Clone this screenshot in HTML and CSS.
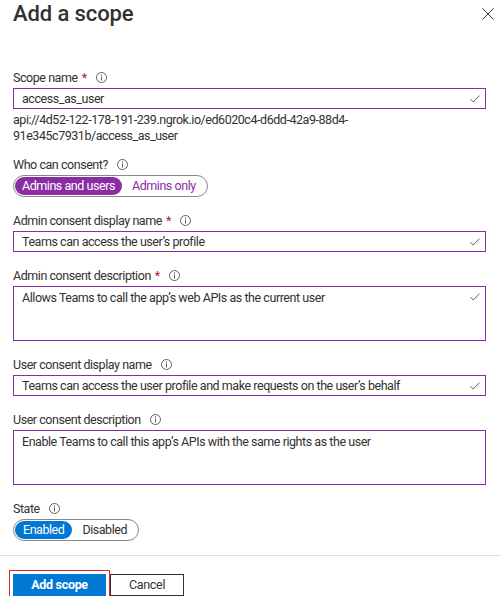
FILE: index.html
```html
<!DOCTYPE html>
<html lang="en">
<head>
<meta charset="utf-8">
<title>Add a scope</title>
<link rel="stylesheet" href="styles.css">
</head>
<body>
<div class="panel">
  <header class="head">
    <h1 class="title">Add a scope</h1>
    <button class="close" aria-label="Close">
      <svg width="12" height="12" viewBox="0 0 12 12"><path d="M0.5 0.5L11.5 11.5M11.5 0.5L0.5 11.5" stroke="#323130" stroke-width="1" fill="none"/></svg>
    </button>
  </header>

  <main class="form">
    <section class="field first">
      <div class="label"><span>Scope name</span><span class="req">*</span><span class="info"><svg width="11" height="11" viewBox="0 0 11 11"><circle cx="5.5" cy="5.5" r="5" stroke="#605e5c" fill="none"/><path d="M5.5 4.5V8.5" stroke="#605e5c"/><circle cx="5.5" cy="3" r="0.7" fill="#605e5c"/></svg></span></div>
      <div class="input"><span class="value">access_as_user</span><svg class="check" width="10" height="8" viewBox="0 0 10 8"><path d="M0.5 4.2L3.2 7L9.5 0.6" stroke="#605e5c" fill="none"/></svg></div>
      <div class="hint">api://4d52-122-178-191-239.ngrok.io/ed6020c4-d6dd-42a9-88d4-<br>91e345c7931b/access_as_user</div>
    </section>

    <section class="field who">
      <div class="label"><span>Who can consent?</span><span class="info"><svg width="11" height="11" viewBox="0 0 11 11"><circle cx="5.5" cy="5.5" r="5" stroke="#605e5c" fill="none"/><path d="M5.5 4.5V8.5" stroke="#605e5c"/><circle cx="5.5" cy="3" r="0.7" fill="#605e5c"/></svg></span></div>
      <div class="toggle purple">
        <span class="opt on">Admins and users</span><span class="opt">Admins only</span>
      </div>
    </section>

    <section class="field">
      <div class="label"><span>Admin consent display name</span><span class="req">*</span><span class="info"><svg width="11" height="11" viewBox="0 0 11 11"><circle cx="5.5" cy="5.5" r="5" stroke="#605e5c" fill="none"/><path d="M5.5 4.5V8.5" stroke="#605e5c"/><circle cx="5.5" cy="3" r="0.7" fill="#605e5c"/></svg></span></div>
      <div class="input"><span class="value">Teams can access the user’s profile</span><svg class="check" width="10" height="8" viewBox="0 0 10 8"><path d="M0.5 4.2L3.2 7L9.5 0.6" stroke="#605e5c" fill="none"/></svg></div>
    </section>

    <section class="field">
      <div class="label"><span>Admin consent description</span><span class="req">*</span><span class="info"><svg width="11" height="11" viewBox="0 0 11 11"><circle cx="5.5" cy="5.5" r="5" stroke="#605e5c" fill="none"/><path d="M5.5 4.5V8.5" stroke="#605e5c"/><circle cx="5.5" cy="3" r="0.7" fill="#605e5c"/></svg></span></div>
      <div class="textarea"><span class="value">Allows Teams to call the app’s web APIs as the current user</span><svg class="check" width="10" height="8" viewBox="0 0 10 8"><path d="M0.5 4.2L3.2 7L9.5 0.6" stroke="#605e5c" fill="none"/></svg></div>
    </section>

    <section class="field">
      <div class="label"><span>User consent display name</span><span class="info"><svg width="11" height="11" viewBox="0 0 11 11"><circle cx="5.5" cy="5.5" r="5" stroke="#605e5c" fill="none"/><path d="M5.5 4.5V8.5" stroke="#605e5c"/><circle cx="5.5" cy="3" r="0.7" fill="#605e5c"/></svg></span></div>
      <div class="input"><span class="value">Teams can access the user profile and make requests on the user’s behalf</span><svg class="check" width="10" height="8" viewBox="0 0 10 8"><path d="M0.5 4.2L3.2 7L9.5 0.6" stroke="#605e5c" fill="none"/></svg></div>
    </section>

    <section class="field">
      <div class="label"><span>User consent description</span><span class="info"><svg width="11" height="11" viewBox="0 0 11 11"><circle cx="5.5" cy="5.5" r="5" stroke="#605e5c" fill="none"/><path d="M5.5 4.5V8.5" stroke="#605e5c"/><circle cx="5.5" cy="3" r="0.7" fill="#605e5c"/></svg></span></div>
      <div class="textarea"><span class="value">Enable Teams to call this app’s APIs with the same rights as the user</span></div>
    </section>

    <section class="field">
      <div class="label"><span>State</span><span class="info"><svg width="11" height="11" viewBox="0 0 11 11"><circle cx="5.5" cy="5.5" r="5" stroke="#605e5c" fill="none"/><path d="M5.5 4.5V8.5" stroke="#605e5c"/><circle cx="5.5" cy="3" r="0.7" fill="#605e5c"/></svg></span></div>
      <div class="toggle blue">
        <span class="opt on">Enabled</span><span class="opt">Disabled</span>
      </div>
    </section>
  </main>

  <footer class="foot">
    <button class="btn primary">Add scope</button>
    <button class="btn secondary">Cancel</button>
  </footer>
</div>
</body>
</html>
```

FILE: styles.css
```css
* { box-sizing: border-box; }

html, body {
  margin: 0;
  padding: 0;
  background: #ffffff;
}

body {
  font-family: Roboto, "Liberation Sans", sans-serif;
  font-size: 12.5px;
  letter-spacing: -0.45px;
  color: #323130;
}

.panel {
  width: 501px;
}

.head {
  display: flex;
  justify-content: space-between;
  align-items: flex-start;
  padding: 0 7px 0 13px;
  height: 28px;
}

.title {
  margin: 0;
  font-size: 22px;
  line-height: 28px;
  font-weight: 500;
  letter-spacing: -0.1px;
  color: #323130;
}

.close {
  border: 0;
  background: transparent;
  padding: 0;
  margin-top: 8px;
  width: 12px;
  height: 12px;
  display: flex;
}

.form {
  padding: 0 15px 0 13px;
}

.field {
  margin-top: 15px;
}

.field.first {
  margin-top: 41px;
}

.field.who {
  margin-top: 12px;
}

.label {
  display: flex;
  align-items: center;
  line-height: 17px;
  height: 17px;
  margin-bottom: 2px;
}

.req {
  color: #a4262c;
  margin-left: 4px;
}

.info {
  display: inline-flex;
  margin-left: 9px;
}

.input,
.textarea {
  display: flex;
  justify-content: space-between;
  border: 1px solid #8a2da5;
  padding: 0 5px 0 8px;
  line-height: 16px;
}

.input {
  height: 21px;
  align-items: center;
}

.textarea {
  height: 55px;
  align-items: flex-start;
  padding-top: 3px;
}

.textarea .check {
  margin-top: 3px;
}

.value {
  white-space: nowrap;
}

.hint {
  margin-top: 3px;
  line-height: 16px;
}

.toggle {
  display: inline-flex;
  align-items: center;
  height: 22px;
  border: 1px solid #8a8886;
  border-radius: 11px;
  padding: 0 1px;
}

.opt {
  height: 18px;
  line-height: 18px;
  padding: 0 10px;
  border-radius: 9px;
}

.opt.on {
  color: #ffffff;
  padding: 0 7px;
}

.toggle.purple .opt {
  color: #8a2da5;
}

.toggle.purple .opt.on {
  background: #8a2da5;
  color: #ffffff;
}

.toggle.blue .opt.on {
  background: #0078d4;
  padding: 0 8px;
}

.foot {
  margin-top: 14px;
  border-top: 1px solid #e1dfdd;
  padding: 18px 13px 0;
  display: flex;
  gap: 4px;
}

.btn {
  height: 22px;
  font-family: inherit;
  font-size: 12.5px;
  letter-spacing: -0.3px;
  line-height: 20px;
  padding: 0;
  margin: 0;
  cursor: pointer;
}

.btn.primary {
  width: 93px;
  background: #0078d4;
  border: 1px solid #0078d4;
  color: #ffffff;
  font-weight: 700;
  outline: 1px solid #e3262c;
  outline-offset: 3px;
}

.btn.secondary {
  width: 74px;
  background: #ffffff;
  border: 1px solid #323130;
  color: #323130;
}
```
